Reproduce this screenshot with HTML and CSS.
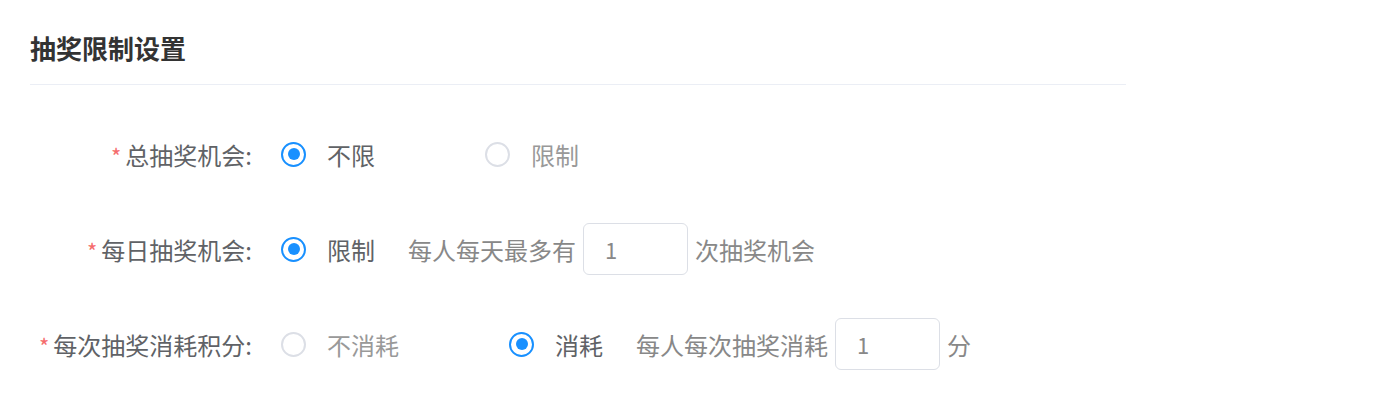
FILE: index.html
```html
<!DOCTYPE html>
<html lang="zh-CN">
<head>
    <meta charset="UTF-8">
    <meta name="viewport" content="width=device-width, initial-scale=1.0">
    <title>抽奖限制设置</title>
    <link rel="stylesheet" href="styles.css">
</head>
<body>
    <div class="section">
        <h2 class="section-title">抽奖限制设置</h2>

        <div class="form">
            <div class="form-row">
                <label class="form-label"><span class="required">*</span>总抽奖机会:</label>
                <div class="form-content">
                    <label class="radio checked"><span class="radio-dot"></span><span class="radio-text">不限</span></label>
                    <label class="radio"><span class="radio-dot"></span><span class="radio-text">限制</span></label>
                </div>
            </div>

            <div class="form-row">
                <label class="form-label"><span class="required">*</span>每日抽奖机会:</label>
                <div class="form-content">
                    <label class="radio checked single"><span class="radio-dot"></span><span class="radio-text">限制</span></label>
                    <span class="extra-text">每人每天最多有</span>
                    <input class="num-input" type="text" value="1">
                    <span class="unit-text">次抽奖机会</span>
                </div>
            </div>

            <div class="form-row">
                <label class="form-label"><span class="required">*</span>每次抽奖消耗积分:</label>
                <div class="form-content">
                    <label class="radio"><span class="radio-dot"></span><span class="radio-text">不消耗</span></label>
                    <label class="radio checked single"><span class="radio-dot"></span><span class="radio-text">消耗</span></label>
                    <span class="extra-text">每人每次抽奖消耗</span>
                    <input class="num-input" type="text" value="1">
                    <span class="unit-text">分</span>
                </div>
            </div>
        </div>
    </div>
</body>
</html>
```

FILE: styles.css
```css
:root {
    --text-color: #606266;
    --title-color: #333;
    --light-text: #999;
    --primary: #1890ff;
    --border-color: #dcdfe6;
    --line-color: #ebeef5;
    --danger: #f56c6c;
}

body {
    margin: 0;
    background: #fff;
    font-family: "Noto Sans CJK SC", "Noto Sans", sans-serif;
    color: var(--text-color);
}

.section {
    width: 1096px;
    padding: 28px 0 0 30px;
}

.section-title {
    margin: 0;
    font-size: 26px;
    line-height: 40px;
    font-weight: bold;
    color: var(--title-color);
    padding-bottom: 16px;
    border-bottom: 1px solid var(--line-color);
}

.form {
    padding-top: 43px;
}

.form-row {
    display: flex;
    align-items: center;
    height: 52px;
    margin-bottom: 43px;
    font-size: 24px;
}

.form-label {
    width: 222px;
    text-align: right;
    color: var(--text-color);
    flex-shrink: 0;
}

.required {
    color: var(--danger);
    font-size: 22px;
    margin-right: 4px;
}

.form-content {
    display: flex;
    align-items: center;
    margin-left: 29px;
}

.radio {
    display: flex;
    align-items: center;
    margin-right: 110px;
    cursor: pointer;
}

.radio.single {
    margin-right: 0;
}

.radio-dot {
    position: relative;
    width: 25px;
    height: 25px;
    box-sizing: border-box;
    border: 2px solid var(--border-color);
    border-radius: 50%;
    background: #fff;
}

.radio.checked .radio-dot {
    border-color: var(--primary);
}

.radio.checked .radio-dot::after {
    content: "";
    position: absolute;
    left: 50%;
    top: 50%;
    width: 12px;
    height: 12px;
    margin: -6px 0 0 -6px;
    border-radius: 50%;
    background: var(--primary);
}

.radio-text {
    margin-left: 21px;
    color: var(--light-text);
}

.radio.checked .radio-text {
    color: var(--text-color);
}

.extra-text {
    margin-left: 33px;
    color: #888;
}

.num-input {
    width: 105px;
    height: 52px;
    box-sizing: border-box;
    margin: 0 7px;
    padding: 0 21px;
    border: 1px solid var(--border-color);
    border-radius: 6px;
    font-family: inherit;
    font-size: 22px;
    color: #888;
    outline: none;
}

.unit-text {
    color: #888;
}
```
